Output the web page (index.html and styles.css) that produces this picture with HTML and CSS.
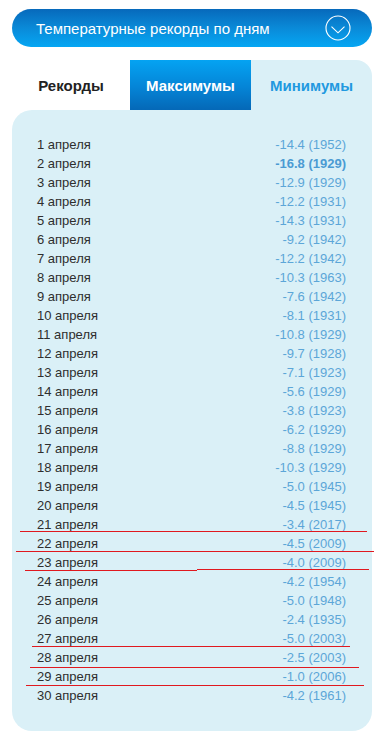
FILE: index.html
```html
<!DOCTYPE html>
<html lang="ru">
<head>
<meta charset="utf-8">
<link rel="stylesheet" href="styles.css">
</head>
<body>
<div class="page">
  <div class="header">
    <span class="header-title">Температурные рекорды по дням</span>
    <svg class="header-icon" width="26" height="26" viewBox="0 0 26 26">
      <circle cx="13" cy="13" r="12" fill="none" stroke="#fff" stroke-width="1.1"/>
      <polyline points="6.5,11.7 13,17.8 19.5,11.7" fill="none" stroke="#fff" stroke-width="1.1"/>
    </svg>
  </div>
  <div class="tabs">
    <div class="tab tab-records">Рекорды</div>
    <div class="tab tab-max">Максимумы</div>
    <div class="tab tab-min">Минимумы</div>
  </div>
  <div class="panel">
    <div class="row"><span class="day">1 апреля</span><span class="val">-14.4 (1952)</span></div>
    <div class="row"><span class="day">2 апреля</span><span class="val val-bold">-16.8 (1929)</span></div>
    <div class="row"><span class="day">3 апреля</span><span class="val">-12.9 (1929)</span></div>
    <div class="row"><span class="day">4 апреля</span><span class="val">-12.2 (1931)</span></div>
    <div class="row"><span class="day">5 апреля</span><span class="val">-14.3 (1931)</span></div>
    <div class="row"><span class="day">6 апреля</span><span class="val">-9.2 (1942)</span></div>
    <div class="row"><span class="day">7 апреля</span><span class="val">-12.2 (1942)</span></div>
    <div class="row"><span class="day">8 апреля</span><span class="val">-10.3 (1963)</span></div>
    <div class="row"><span class="day">9 апреля</span><span class="val">-7.6 (1942)</span></div>
    <div class="row"><span class="day">10 апреля</span><span class="val">-8.1 (1931)</span></div>
    <div class="row"><span class="day">11 апреля</span><span class="val">-10.8 (1929)</span></div>
    <div class="row"><span class="day">12 апреля</span><span class="val">-9.7 (1928)</span></div>
    <div class="row"><span class="day">13 апреля</span><span class="val">-7.1 (1923)</span></div>
    <div class="row"><span class="day">14 апреля</span><span class="val">-5.6 (1929)</span></div>
    <div class="row"><span class="day">15 апреля</span><span class="val">-3.8 (1923)</span></div>
    <div class="row"><span class="day">16 апреля</span><span class="val">-6.2 (1929)</span></div>
    <div class="row"><span class="day">17 апреля</span><span class="val">-8.8 (1929)</span></div>
    <div class="row"><span class="day">18 апреля</span><span class="val">-10.3 (1929)</span></div>
    <div class="row"><span class="day">19 апреля</span><span class="val">-5.0 (1945)</span></div>
    <div class="row"><span class="day">20 апреля</span><span class="val">-4.5 (1945)</span></div>
    <div class="row"><span class="day">21 апреля</span><span class="val">-3.4 (2017)</span></div>
    <div class="row"><span class="day">22 апреля</span><span class="val">-4.5 (2009)</span></div>
    <div class="row"><span class="day">23 апреля</span><span class="val">-4.0 (2009)</span></div>
    <div class="row"><span class="day">24 апреля</span><span class="val">-4.2 (1954)</span></div>
    <div class="row"><span class="day">25 апреля</span><span class="val">-5.0 (1948)</span></div>
    <div class="row"><span class="day">26 апреля</span><span class="val">-2.4 (1935)</span></div>
    <div class="row"><span class="day">27 апреля</span><span class="val">-5.0 (2003)</span></div>
    <div class="row"><span class="day">28 апреля</span><span class="val">-2.5 (2003)</span></div>
    <div class="row"><span class="day">29 апреля</span><span class="val">-1.0 (2006)</span></div>
    <div class="row"><span class="day">30 апреля</span><span class="val">-4.2 (1961)</span></div>
  </div>
  <div class="marks">
    <div class="mark" style="left:20px;top:531px;width:347px"></div>
    <div class="mark" style="left:16px;top:551px;width:358px"></div>
    <div class="mark" style="left:25px;top:570px;width:172px"></div>
    <div class="mark" style="left:197px;top:569px;width:172px"></div>
    <div class="mark" style="left:32px;top:646px;width:318px"></div>
    <div class="mark" style="left:30px;top:667px;width:329px"></div>
    <div class="mark" style="left:26px;top:685px;width:338px"></div>
  </div>
</div>
</body>
</html>
```

FILE: styles.css
```css
html, body {
  margin: 0;
  padding: 0;
  background: #fff;
}

.page {
  position: relative;
  width: 360px;
  padding: 9px 12px 14px;
  font-family: "Liberation Sans", Arial, sans-serif;
}

.header {
  height: 38px;
  border-radius: 19px;
  background: linear-gradient(to bottom, #0769bb 0%, #0a8ad8 50%, #05a6f3 100%);
  display: flex;
  align-items: center;
  justify-content: space-between;
  padding: 0 21px 0 24px;
  box-sizing: border-box;
}

.header-title {
  color: #fff;
  font-size: 15px;
  letter-spacing: 0;
}

.header-icon {
  display: block;
}

.tabs {
  margin-top: 13px;
  display: grid;
  grid-template-columns: 118px 121px 121px;
  height: 50px;
}

.tab {
  display: flex;
  align-items: center;
  justify-content: center;
  font-size: 15px;
  font-weight: bold;
}

.tab-records {
  background: #fff;
  color: #222;
}

.tab-max {
  background: linear-gradient(to bottom, #05a3f2 0%, #0584d6 55%, #0568b7 100%);
  color: #fff;
}

.tab-min {
  background: #daf0f7;
  color: #2199e0;
  border-top-right-radius: 16px;
}

.panel {
  background: #daf0f7;
  border-radius: 20px 0 20px 20px;
  padding: 25px 26px 26px 25px;
}

.row {
  display: flex;
  justify-content: space-between;
  font-size: 13px;
  line-height: 19px;
  height: 19px;
}

.day {
  color: #2e2e2e;
}

.val {
  color: #5ca6d8;
}

.val-bold {
  font-weight: bold;
  color: #4b9bd3;
}

.marks {
  position: absolute;
  left: 0;
  top: 0;
  width: 0;
  height: 0;
}

.mark {
  position: absolute;
  height: 1px;
  background: #e0191f;
}
```
